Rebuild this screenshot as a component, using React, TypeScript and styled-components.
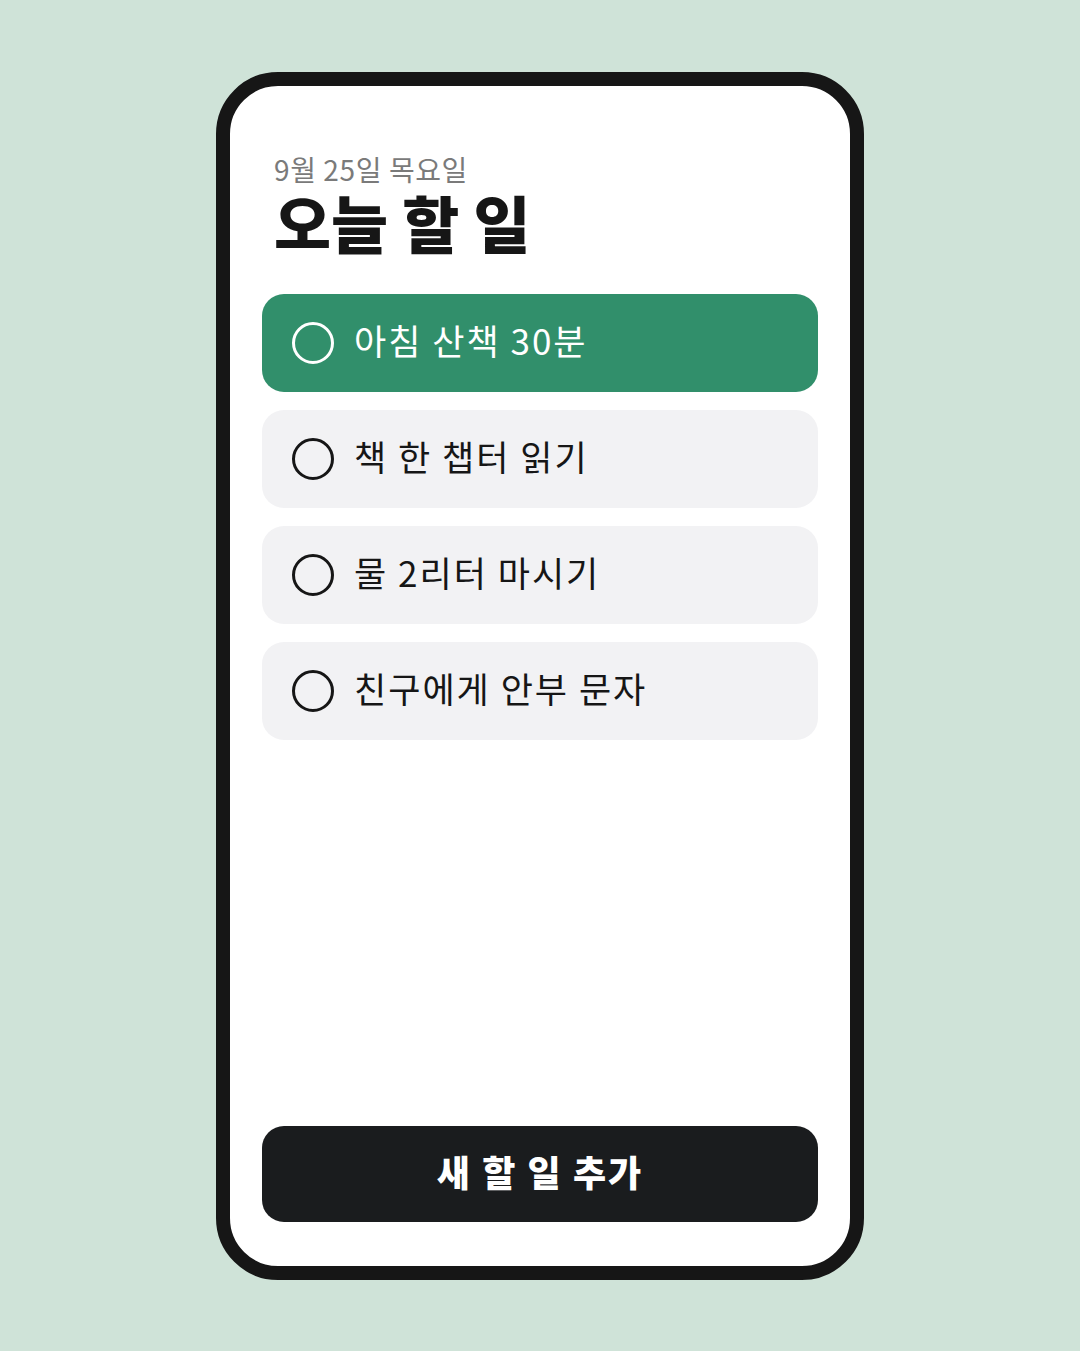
import styled, { createGlobalStyle } from 'styled-components';

const GlobalStyle = createGlobalStyle`
  html, body {
    margin: 0;
    padding: 0;
    background: #cfe3d8;
  }
  body {
    font-family: "Noto Sans CJK KR", "Noto Sans", sans-serif;
  }
`;

const Screen = styled.div`
  width: 1080px;
  height: 1351px;
  display: flex;
  align-items: center;
  justify-content: center;
  background: #cfe3d8;
`;

const Phone = styled.div`
  box-sizing: border-box;
  width: 648px;
  height: 1208px;
  border: 14px solid #161616;
  border-radius: 62px;
  background: #ffffff;
  padding: 66px 32px 44px;
  display: flex;
  flex-direction: column;
`;

const Header = styled.header`
  padding-left: 12px;
  display: flex;
  flex-direction: column;
  gap: 4px;
`;

const DateLabel = styled.div`
  font-size: 28px;
  line-height: 34px;
  letter-spacing: 0.6px;
  color: #7a7a7a;
`;

const Title = styled.h1`
  margin: 0;
  font-size: 62px;
  line-height: 64px;
  font-weight: 900;
  color: #161616;
`;

const List = styled.ul`
  list-style: none;
  margin: 40px 0 0;
  padding: 0;
  display: flex;
  flex-direction: column;
  gap: 18px;
`;

const Item = styled.li<{ $active?: boolean }>`
  height: 98px;
  border-radius: 22px;
  background: ${(p) => (p.$active ? '#318f6b' : '#f2f2f4')};
  color: ${(p) => (p.$active ? '#ffffff' : '#161616')};
  display: flex;
  align-items: center;
  padding-left: 30px;
  gap: 20px;
`;

const Check = styled.span<{ $active?: boolean }>`
  box-sizing: border-box;
  width: 42px;
  height: 42px;
  border-radius: 50%;
  border: 3px solid ${(p) => (p.$active ? '#ffffff' : '#161616')};
  flex-shrink: 0;
`;

const ItemText = styled.span`
  font-size: 35px;
  line-height: 1;
  letter-spacing: 2px;
  margin-bottom: 6px;
`;

const AddButton = styled.button`
  margin-top: auto;
  height: 96px;
  border: none;
  border-radius: 22px;
  background: #1a1c1e;
  color: #ffffff;
  font-family: "Noto Sans CJK KR", "Noto Sans", sans-serif;
  font-size: 36px;
  font-weight: 900;
  letter-spacing: 2px;
  padding-bottom: 6px;
  cursor: pointer;
`;

const todos = [
  { text: '아침 산책 30분', active: true },
  { text: '책 한 챕터 읽기', active: false },
  { text: '물 2리터 마시기', active: false },
  { text: '친구에게 안부 문자', active: false },
];

export default function App() {
  return (
    <>
      <GlobalStyle />
      <Screen>
        <Phone>
          <Header>
            <DateLabel>9월 25일 목요일</DateLabel>
            <Title>오늘 할 일</Title>
          </Header>
          <List>
            {todos.map((t) => (
              <Item key={t.text} $active={t.active}>
                <Check $active={t.active} />
                <ItemText>{t.text}</ItemText>
              </Item>
            ))}
          </List>
          <AddButton>새 할 일 추가</AddButton>
        </Phone>
      </Screen>
    </>
  );
}
